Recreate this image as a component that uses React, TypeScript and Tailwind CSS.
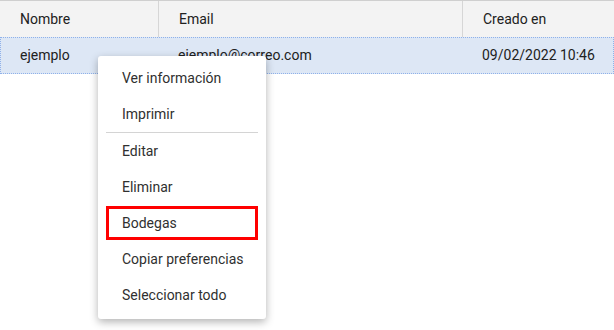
import React from "react";

const columns = [
    { label: "Nombre", width: "w-[159px]" },
    { label: "Email", width: "w-[304px]" },
    { label: "Creado en", width: "flex-1" },
];

const menuItems = [
    ["Ver información", "Imprimir"],
    ["Editar", "Eliminar", "Bodegas", "Copiar preferencias", "Seleccionar todo"],
];

export default function App() {
    return (
        <div className="relative h-[330px] w-[614px] overflow-hidden bg-white text-[14px] font-['Roboto',sans-serif] text-[#212121]">
            {/* header */}
            <div className="flex h-[37px] border-t border-[#cfcfcf] bg-[#f3f3f3]">
                {columns.map((c, i) => (
                    <div key={c.label} className={`${c.width} flex items-center pl-[20px] ${i < 2 ? "border-r border-[#d6d6d6]" : ""}`}>
                        {c.label}
                    </div>
                ))}
            </div>
            {/* row */}
            <div className="flex h-[37px] border border-dotted border-[#8fb1ea] bg-[#dde7f5]">
                <div className="flex w-[158px] items-center pl-[19px]">ejemplo</div>
                <div className="flex w-[304px] items-center pl-[19px]">ejemplo@correo.com</div>
                <div className="flex flex-1 items-center pl-[19px]">09/02/2022 10:46</div>
            </div>

            {/* context menu */}
            <div className="absolute left-[98px] top-[56px] w-[168px] rounded-[3px] bg-white pt-[4px] pb-[6px] shadow-[0_3px_8px_rgba(0,0,0,0.3)]">
                {menuItems.map((group, gi) => (
                    <div key={gi} className={gi > 0 ? "mx-2 border-t border-[#d4d4d4]" : "mx-2"}>
                        {group.map((item) => (
                            <div key={item} className="relative flex h-[36px] items-center pl-4 text-[#303030]">
                                {item}
                                {item === "Bodegas" && (
                                    <span className="absolute inset-x-0 top-[1px] bottom-[1px] border-[3px] border-[#ff0000]" />
                                )}
                            </div>
                        ))}
                    </div>
                ))}
            </div>
        </div>
    );
}
